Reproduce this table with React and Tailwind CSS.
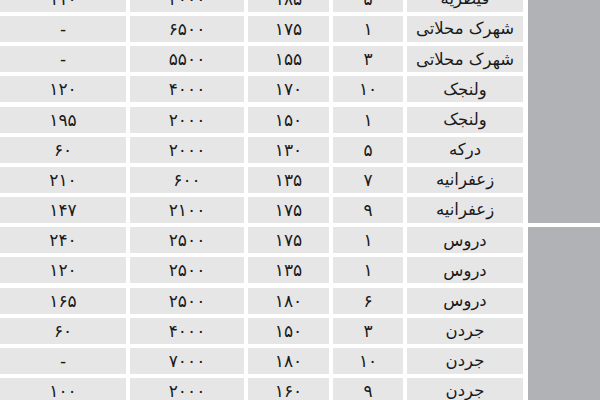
import React from 'react';

// rows: [extra, price, area, count, neighborhood]
const rows = [
  ['۱۱۰', '۲۰۰۰', '۱۸۵', '۵', 'قیطریه'],
  ['-', '۶۵۰۰', '۱۷۵', '۱', 'شهرک محلاتی'],
  ['-', '۵۵۰۰', '۱۵۵', '۳', 'شهرک محلاتی'],
  ['۱۲۰', '۴۰۰۰', '۱۷۰', '۱۰', 'ولنجک'],
  ['۱۹۵', '۲۰۰۰', '۱۵۰', '۱', 'ولنجک'],
  ['۶۰', '۲۰۰۰', '۱۳۰', '۵', 'درکه'],
  ['۲۱۰', '۶۰۰', '۱۳۵', '۷', 'زعفرانیه'],
  ['۱۴۷', '۲۱۰۰', '۱۷۵', '۹', 'زعفرانیه'],
  ['۲۴۰', '۲۵۰۰', '۱۷۵', '۱', 'دروس'],
  ['۱۲۰', '۲۵۰۰', '۱۳۵', '۱', 'دروس'],
  ['۱۶۵', '۲۵۰۰', '۱۸۰', '۶', 'دروس'],
  ['۶۰', '۴۰۰۰', '۱۵۰', '۳', 'جردن'],
  ['-', '۷۰۰۰', '۱۸۰', '۱۰', 'جردن'],
  ['۱۰۰', '۲۰۰۰', '۱۶۰', '۹', 'جردن'],
];

export default function App() {
  return (
    <div
      className="flex w-[600px] h-[400px] overflow-hidden bg-white text-[#1a1a1a]"
      style={{ fontFamily: '"DejaVu Sans", "Noto Sans", sans-serif' }}
    >
      {/* Table */}
      <div className="flex flex-col gap-y-[4.17px] -mt-[14px] w-[523px] shrink-0">
        {rows.map((r, i) => (
          <div
            key={i}
            className="grid grid-cols-[126px_114px_81px_70px_116px] gap-x-[4px] h-[26px] shrink-0"
          >
            {r.map((cell, j) => (
              <div
                key={j}
                dir="rtl"
                className={
                  j === 4
                    ? 'flex items-center justify-center bg-[#e6e6e7] text-[16.5px] leading-none pt-[1px]'
                    : 'flex items-center justify-center bg-[#e6e6e7] text-[17px] leading-none font-medium pt-[1px]'
                }
              >
                {cell}
              </div>
            ))}
          </div>
        ))}
      </div>

      {/* Region bands */}
      <div className="flex flex-col gap-y-[4px] ml-[5px] -mt-[14px] flex-1">
        <div className="h-[237px] bg-[#b1b2b6] shrink-0" />
        <div className="flex-1 bg-[#b1b2b6]" />
      </div>
    </div>
  );
}
